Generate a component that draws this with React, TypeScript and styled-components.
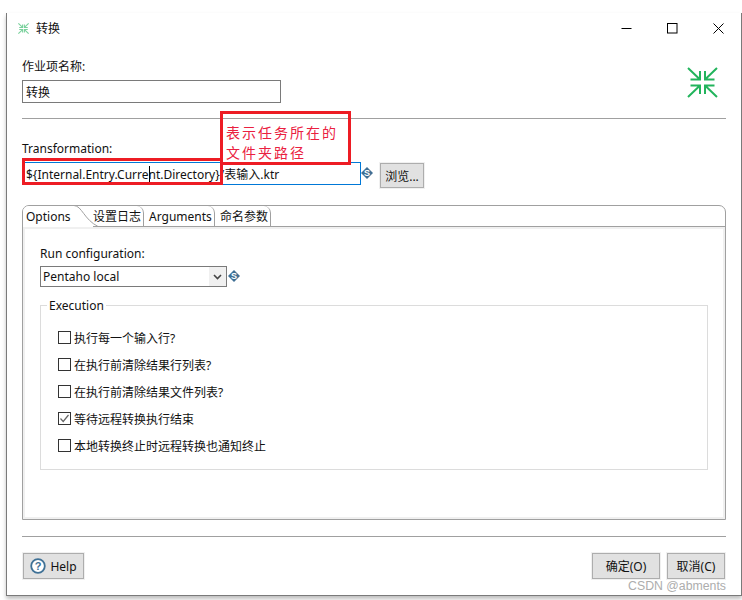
import React from "react";
import styled, { createGlobalStyle } from "styled-components";

const Global = createGlobalStyle`
  html, body { margin: 0; padding: 0; background: #fff; }
  body { font-family: "Noto Sans", "Noto Sans CJK SC", sans-serif; font-size: 12px; color: #111; }
`;

const Page = styled.div`
  position: relative;
  width: 742px;
  height: 600px;
  padding: 13px 0 0 6px;
  box-sizing: border-box;
  overflow: hidden;
`;

const Win = styled.div`
  width: 736px;
  height: 583px;
  box-sizing: border-box;
  background: #fff;
  border-left: 1px solid #7a7a7a;
  border-right: 1px solid #7a7a7a;
  border-bottom: 1px solid #7a7a7a;
  box-shadow: 0 3px 4px rgba(0, 0, 0, 0.25);
`;

const TitleBar = styled.div`
  height: 30px;
  display: flex;
  align-items: center;
  padding: 0 17px 0 11px;
  gap: 7px;
`;
const TitleText = styled.span`
  flex: 1;
  font-size: 12px;
`;
const WinControls = styled.div`
  display: flex;
  gap: 35px;
`;

const Content = styled.div`
  padding: 15px 15px 0;
`;
const TopRow = styled.div`
  display: flex;
  justify-content: space-between;
`;
const NameCol = styled.div`
  width: 259px;
`;
const FieldLabel = styled.div`
  line-height: 18px;
  height: 16px;
`;
const TextBox = styled.div<{ $focus?: boolean; $w: number }>`
  margin-top: 6px;
  width: ${(p) => p.$w}px;
  height: 23px;
  box-sizing: border-box;
  border: 1px solid ${(p) => (p.$focus ? "#0078d7" : "#7a7a7a")};
  padding: 0 3px;
  line-height: 23px;
  white-space: nowrap;
  overflow: hidden;
`;
const Caret = styled.span`
  display: inline-block;
  width: 1px;
  height: 18px;
  margin-right: -1px;
  background: #000;
  vertical-align: -5px;
`;
const BigIcon = styled.div`
  margin: 9px 8px 0 0;
`;
const Divider = styled.div<{ $top: number }>`
  height: 1px;
  background: #a0a0a0;
  margin-top: ${(p) => p.$top}px;
`;
const TransLabel = styled(FieldLabel)`
  margin-top: 21px;
`;
const PathRow = styled.div`
  display: flex;
  align-items: flex-start;
`;
const BrowseBtn = styled.div`
  width: 44px;
  height: 25px;
  margin: 7px 0 0 7px;
  box-sizing: border-box;
  border: 1px solid #adadad;
  outline: 1px solid #f0f0f0;
  background: #e1e1e1;
  display: flex;
  align-items: center;
  justify-content: center;
`;

const Folder = styled.div`
  margin-top: 17px;
  height: 315px;
  box-sizing: border-box;
  border: 1px solid #a0a0a0;
  border-radius: 7px 7px 0 0;
  display: flex;
  flex-direction: column;
  overflow: hidden;
`;
const TabStrip = styled.div`
  height: 21px;
  flex: none;
  display: flex;
  align-items: stretch;
  box-shadow: inset 0 -1px 0 #a0a0a0;
`;
const ActiveTab = styled.div`
  width: 51px;
  padding-left: 3px;
  box-sizing: border-box;
  line-height: 21px;
  background: #fff;
`;
const Slope = styled.svg`
  flex: none;
  margin-right: -5px;
`;
const Tab = styled.div<{ $w: number; $pad: number }>`
  width: ${(p) => p.$w}px;
  box-sizing: border-box;
  line-height: 21px;
  padding-left: ${(p) => p.$pad}px;
  white-space: nowrap;
  border-right: 1px solid #a0a0a0;
  border-bottom: 1px solid #a0a0a0;
  border-top-right-radius: 7px;
`;
const Panel = styled.div`
  flex: 1;
  box-sizing: border-box;
  border: 2px solid #f0f0f0;
  padding: 16px 15px 0;
`;
const ConfigLabel = styled.div`
  line-height: 18px;
  height: 16px;
`;
const SelectRow = styled.div`
  display: flex;
  align-items: flex-start;
  margin-top: 5px;
`;
const SelectBox = styled.div`
  width: 187px;
  height: 21px;
  box-sizing: border-box;
  border: 1px solid #7a7a7a;
  display: flex;
  line-height: 19px;
  padding-left: 2px;
`;
const SelectValue = styled.span`
  flex: 1;
`;
const SelectArrow = styled.span`
  width: 17px;
  background: #f0f0f0;
  display: flex;
  align-items: center;
  justify-content: center;
`;
const Group = styled.fieldset`
  margin: 10px 0 0;
  padding: 11px 0 0 17px;
  width: 668px;
  height: 173px;
  box-sizing: border-box;
  border: 1px solid #dcdcdc;
  display: block;
  min-width: 0;
`;
const Legend = styled.legend`
  margin-left: -11px;
  padding: 0 2px;
  height: 16px;
  line-height: 18px;
`;
const CheckRow = styled.div`
  display: flex;
  align-items: center;
  gap: 3px;
  height: 27px;
`;
const CheckBox = styled.span`
  width: 13px;
  height: 13px;
  box-sizing: border-box;
  border: 1px solid #333;
  background: #fff;
  display: flex;
  align-items: center;
  justify-content: center;
`;
const Footer = styled.div`
  margin-top: 16px;
  padding: 0 1px;
  display: flex;
  align-items: center;
`;
const Btn = styled.div<{ $w: number }>`
  width: ${(p) => p.$w}px;
  height: 26px;
  box-sizing: border-box;
  border: 1px solid #adadad;
  outline: 1px solid #f0f0f0;
  background: #e1e1e1;
  display: flex;
  align-items: center;
  justify-content: center;
  gap: 4px;
`;
const Spacer = styled.div`
  flex: 1;
`;
const OkBtn = styled(Btn)`
  margin-right: 7px;
`;

const RedFrame = styled.div<{ $x: number; $y: number; $w: number; $h: number }>`
  position: absolute;
  left: ${(p) => p.$x}px;
  top: ${(p) => p.$y}px;
  width: ${(p) => p.$w}px;
  height: ${(p) => p.$h}px;
  box-sizing: border-box;
  border: 3px solid #ed1c24;
`;
const RedNote = styled.div`
  position: absolute;
  left: 226px;
  top: 123px;
  font-size: 14px;
  line-height: 20px;
  letter-spacing: 2px;
  color: #ea2040;
  white-space: nowrap;
`;
const Watermark = styled.div`
  position: absolute;
  right: 16px;
  top: 578px;
  font-family: "Liberation Sans", sans-serif;
  font-size: 12.3px;
  line-height: 16px;
  color: #adadad;
`;

const Compress = ({ size, faded }: { size: number; faded?: boolean }) => (
  <svg
    width={size}
    height={size}
    viewBox="0 0 31 31"
    fill="none"
    stroke="#22b45c"
    strokeWidth={faded ? 3 : 2}
    opacity={faded ? 0.6 : 1}
  >
    <path d="M1 1 13 12.5M3.5 12.5H13V4" />
    <path d="M30 1 18 12.5M27.5 12.5H18V4" />
    <path d="M1 30 13 18.5M3.5 18.5H13V27" />
    <path d="M30 30 18 18.5M27.5 18.5H18V27" />
  </svg>
);

const Var = ({ className }: { className?: string }) => (
  <svg className={className} width="12" height="12" viewBox="0 0 12 12">
    <path d="M6 0 12 6 6 12 0 6Z" fill="#3f6f94" />
    <text x="6" y="9.2" textAnchor="middle" fontSize="9" fontWeight="700" fontFamily="Liberation Sans, sans-serif" fill="#fff">
      S
    </text>
  </svg>
);
const PathVar = styled(Var)`
  flex: none;
  margin-top: 11px;
`;
const SelectVar = styled(Var)`
  flex: none;
  margin: 4px 0 0 1px;
`;

const options = [
  ["执行每一个输入行?", false],
  ["在执行前清除结果行列表?", false],
  ["在执行前清除结果文件列表?", false],
  ["等待远程转换执行结束", true],
  ["本地转换终止时远程转换也通知终止", false],
] as const;

export default function App() {
  return (
    <Page>
      <Global />
      <Win>
        <TitleBar>
          <Compress size={11} faded />
          <TitleText>转换</TitleText>
          <WinControls>
            <svg width="11" height="11" viewBox="0 0 11 11" stroke="#000" fill="none">
              <path d="M0.5 5.5H10.5" />
            </svg>
            <svg width="11" height="11" viewBox="0 0 11 11" stroke="#000" fill="none">
              <rect x="0.5" y="0.5" width="9.5" height="9.5" />
            </svg>
            <svg width="11" height="11" viewBox="0 0 11 11" stroke="#000" fill="none">
              <path d="M0.5 0.5 10.5 10.5M10.5 0.5 0.5 10.5" />
            </svg>
          </WinControls>
        </TitleBar>
        <Content>
          <TopRow>
            <NameCol>
              <FieldLabel>作业项名称:</FieldLabel>
              <TextBox $w={259}>转换</TextBox>
            </NameCol>
            <BigIcon>
              <Compress size={31} />
            </BigIcon>
          </TopRow>
          <Divider $top={15} />
          <TransLabel>Transformation:</TransLabel>
          <PathRow>
            <TextBox $focus $w={339}>
              {"${Internal.Entry.Curre"}
              <Caret />
              {"nt.Directory}/表输入.ktr"}
            </TextBox>
            <PathVar />
            <BrowseBtn>浏览...</BrowseBtn>
          </PathRow>
          <Folder>
            <TabStrip>
              <ActiveTab>Options</ActiveTab>
              <Slope width="24" height="21" viewBox="0 0 24 21" fill="none">
                <path d="M0 0C8 0.5 10 14 23 21H0Z" fill="#fff" />
                <path d="M0 -0.5C8 0 10 13.5 24 20.5" stroke="#a0a0a0" />
              </Slope>
              <Tab $w={51} $pad={0}>设置日志</Tab>
              <Tab $w={71} $pad={5}>Arguments</Tab>
              <Tab $w={56} $pad={5}>命名参数</Tab>
            </TabStrip>
            <Panel>
              <ConfigLabel>Run configuration:</ConfigLabel>
              <SelectRow>
                <SelectBox>
                  <SelectValue>Pentaho local</SelectValue>
                  <SelectArrow>
                    <svg width="9" height="6" viewBox="0 0 9 6" fill="none" stroke="#444" strokeWidth="1.6">
                      <path d="M1 1 4.5 4.5 8 1" />
                    </svg>
                  </SelectArrow>
                </SelectBox>
                <SelectVar />
              </SelectRow>
              <Group>
                <Legend>Execution</Legend>
                {options.map(([label, checked]) => (
                  <CheckRow key={label}>
                    <CheckBox>
                      {checked && (
                        <svg width="11" height="11" viewBox="0 0 11 11" fill="none" stroke="#666" strokeWidth="1.2">
                          <path d="M1.5 5.5 4.2 8.5 9.5 2" />
                        </svg>
                      )}
                    </CheckBox>
                    {label}
                  </CheckRow>
                ))}
              </Group>
            </Panel>
          </Folder>
          <Divider $top={16} />
          <Footer>
            <Btn $w={61}>
              <svg width="16" height="16" viewBox="0 0 16 16">
                <circle cx="8" cy="8" r="6.8" fill="#fff" stroke="#3f7196" strokeWidth="1.8" />
                <text x="8" y="12" textAnchor="middle" fontSize="11" fontWeight="700" fontFamily="Liberation Sans, sans-serif" fill="#3f7196">
                  ?
                </text>
              </svg>
              Help
            </Btn>
            <Spacer />
            <OkBtn $w={68}>确定(O)</OkBtn>
            <Btn $w={58}>取消(C)</Btn>
          </Footer>
        </Content>
      </Win>
      <RedFrame $x={22} $y={158} $w={201} $h={27} />
      <RedFrame $x={220} $y={111} $w={131} $h={54} />
      <RedNote>
        表示任务所在的
        <br />
        文件夹路径
      </RedNote>
      <Watermark>CSDN @abments</Watermark>
    </Page>
  );
}
